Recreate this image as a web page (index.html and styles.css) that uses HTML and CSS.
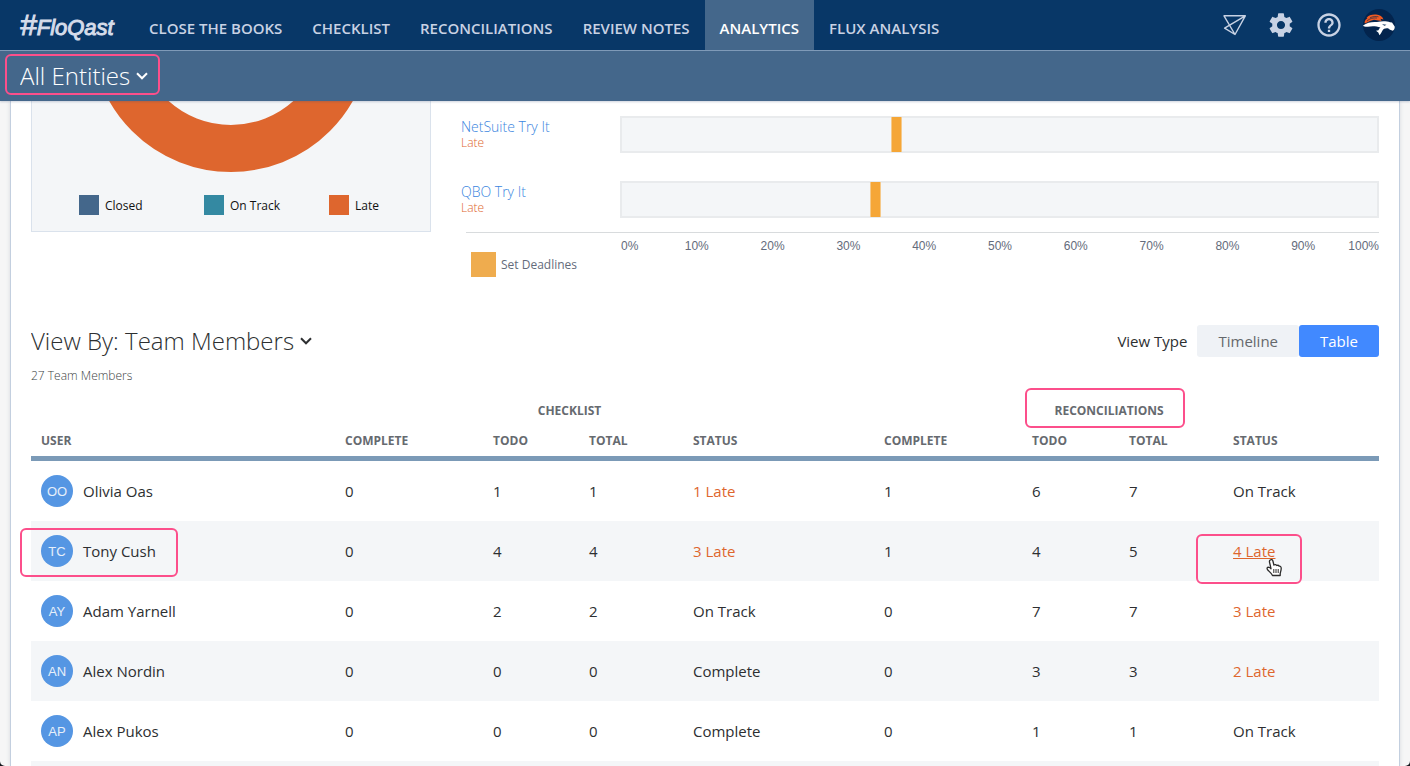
FILE: index.html
```html
<!DOCTYPE html>
<html lang="en">
<head>
<meta charset="utf-8">
<title>FloQast – Analytics</title>
<link rel="stylesheet" href="styles.css">
</head>
<body>
<div class="app">
  <header class="header">
    <div class="topbar">
      <a class="logo" href="#"><span class="logo-hash">#</span>FloQast</a>
      <nav class="nav">
        <a class="nav-link" href="#">CLOSE THE BOOKS</a>
        <a class="nav-link" href="#">CHECKLIST</a>
        <a class="nav-link" href="#">RECONCILIATIONS</a>
        <a class="nav-link" href="#">REVIEW NOTES</a>
        <a class="nav-link nav-link-active" href="#" aria-current="page">ANALYTICS</a>
        <a class="nav-link" href="#">FLUX ANALYSIS</a>
      </nav>
      <div class="tools">
        <button class="tool" type="button" aria-label="Send">
          <svg width="24" height="24" viewBox="0 0 24 24" fill="none" stroke="#c8d2e4" stroke-width="1.4" stroke-linejoin="round"><path d="M1 2.800H22.300L12 21.500ZM22.300 2.800L1.600 15.200L12 21.500"/></svg>
        </button>
        <button class="tool" type="button" aria-label="Settings">
          <svg width="28" height="28" viewBox="0 0 24 24" fill="#c8d2e4"><path d="M19.43 12.98c.04-.32.07-.64.07-.98s-.03-.66-.07-.98l2.11-1.65c.19-.15.24-.42.12-.64l-2-3.46c-.12-.22-.39-.3-.61-.22l-2.49 1c-.52-.4-1.08-.73-1.69-.98l-.38-2.65C14.46 2.18 14.25 2 14 2h-4c-.25 0-.46.18-.49.42l-.38 2.65c-.61.25-1.17.59-1.69.98l-2.49-1c-.23-.09-.49 0-.61.22l-2 3.46c-.13.22-.07.49.12.64l2.11 1.65c-.04.32-.07.65-.07.98s.03.66.07.98l-2.11 1.65c-.19.15-.24.42-.12.64l2 3.46c.12.22.39.3.61.22l2.49-1c.52.4 1.08.73 1.69.98l.38 2.65c.03.24.24.42.49.42h4c.25 0 .46-.18.49-.42l.38-2.65c.61-.25 1.17-.59 1.69-.98l2.49 1c.23.09.49 0 .61-.22l2-3.46c.12-.22.07-.49-.12-.64l-2.11-1.65zM12 15.5c-1.93 0-3.5-1.57-3.5-3.5s1.57-3.5 3.5-3.5 3.5 1.57 3.5 3.5-1.57 3.500-3.5 3.500z"/></svg>
        </button>
        <button class="tool" type="button" aria-label="Help">
          <svg width="28" height="28" viewBox="0 0 24 24" fill="#c8d2e4"><path d="M11 18h2v-2h-2v2zm1-16C6.480 2 2 6.480 2 12s4.480 10 10 10 10-4.480 10-10S17.520 2 12 2zm0 18c-4.410 0-8-3.590-8-8s3.590-8 8-8 8 3.590 8 8-3.590 8-8 8zm0-14c-2.210 0-4 1.790-4 4h2c0-1.100.9-2 2-2s2 .9 2 2c0 2-3 1.750-3 5h2c0-2.250 3-2.500 3-5 0-2.210-1.790-4-4-4z"/></svg>
        </button>
        <button class="tool" type="button" aria-label="Account">
          <svg width="32" height="32" viewBox="0 0 32 32"><circle cx="16" cy="16" r="16" fill="#03244d"/><path d="M1.500 13.500C2 11 3 10 4.500 9.500L3.500 9C5.500 6 9 5.300 13 5.500C17 5.700 19.500 7.500 20.500 10.500L17.500 9.700L18.500 12L11 10.800L7 12L2 14.500Z" fill="#f05a22"/><path d="M4 12C6.500 9.500 10 8.600 14 9M7 8.800C10 7.300 12.500 7.200 15.500 7.800" fill="none" stroke="#03244d" stroke-width=".6"/><path d="M0 16.500C4 13.500 9 12.500 14 13C19 11.900 24 12.200 27 13.200L29 13.500L31.700 17.500C32 19 31.200 21 29.800 21.800L27 20.800L25 19.300C22 19 20.500 19.800 19.500 21.500C18.800 23 18 24.300 16.500 26.300L15.300 23.500L13 21.800L15.500 21.300C15.800 20 16.500 19.200 17.500 18.400C13 16.900 8 16.900 5 17.800C3 18 1 17.800 0 16.500Z" fill="#fff"/><path d="M19 15.200L23.500 15.700L21.500 16.700Z" fill="#03244d"/></svg>
        </button>
      </div>
    </div>
    <div class="entitybar">
      <div class="dropdown dropdown-light">
        <select class="dropdown-select" aria-label="Entity"><option>All Entities</option></select>
        <svg class="chevron" width="12" height="8" viewBox="0 0 12 8"><path d="M1 1.300L6 6.300L11 1.300"/></svg>
        <span class="callout callout-entity"></span>
      </div>
    </div>
  </header>

  <main class="panel">
    <section class="charts">
      <div class="donut-card">
        <svg class="donut" width="280" height="71" viewBox="0 209 280 71" role="img" aria-label="All entities late"><circle cx="140" cy="140" r="116.500" fill="none" stroke="#de662e" stroke-width="47"/></svg>
        <ul class="legend">
          <li class="legend-item"><span class="swatch swatch-closed"></span>Closed</li>
          <li class="legend-item"><span class="swatch swatch-track"></span>On Track</li>
          <li class="legend-item"><span class="swatch swatch-late"></span>Late</li>
        </ul>
      </div>
      <div class="progress">
        <div class="progress-row">
          <div class="progress-label"><a class="entity-link" href="#">NetSuite Try It</a><span class="entity-status">Late</span></div>
          <div class="bar"><span class="marker" style="left:35.6%"></span></div>
        </div>
        <div class="progress-row">
          <div class="progress-label"><a class="entity-link" href="#">QBO Try It</a><span class="entity-status">Late</span></div>
          <div class="bar"><span class="marker" style="left:32.9%"></span></div>
        </div>
        <div class="axis">
          <div class="axis-scale"><span>0%</span><span>10%</span><span>20%</span><span>30%</span><span>40%</span><span>50%</span><span>60%</span><span>70%</span><span>80%</span><span>90%</span><span>100%</span></div>
        </div>
        <div class="deadline-legend"><span class="swatch swatch-deadline"></span>Set Deadlines</div>
      </div>
    </section>

    <section class="team">
      <div class="team-head">
        <div class="dropdown">
          <select class="dropdown-select" aria-label="View by"><option>View By: Team Members</option></select>
          <svg class="chevron" width="12" height="8" viewBox="0 0 12 8"><path d="M1 1.300L6 6.300L11 1.300"/></svg>
        </div>
        <div class="view-type">
          <span class="view-label">View Type</span>
          <button class="toggle" type="button" aria-pressed="false">Timeline</button>
          <button class="toggle toggle-on" type="button" aria-pressed="true">Table</button>
        </div>
      </div>
      <p class="count">27 Team Members</p>
      <table class="table">
        <colgroup><col class="c-user"><col class="c-complete"><col class="c-todo"><col class="c-total"><col class="c-status"><col class="c-complete"><col class="c-todo-rec"><col class="c-total"><col class="c-last"></colgroup>
        <thead>
          <tr class="group-row"><td></td><th class="group-check" colspan="4" scope="colgroup">CHECKLIST</th><th class="group-rec" colspan="4" scope="colgroup"><span class="anchor">RECONCILIATIONS<span class="callout callout-rec"></span></span></th></tr>
          <tr class="head-row"><th scope="col">USER</th><th scope="col">COMPLETE</th><th scope="col">TODO</th><th scope="col">TOTAL</th><th scope="col">STATUS</th><th scope="col">COMPLETE</th><th scope="col">TODO</th><th scope="col">TOTAL</th><th scope="col">STATUS</th></tr>
        </thead>
        <tbody>
          <tr><td><div class="user"><span class="avatar">OO</span>Olivia Oas</div></td><td>0</td><td>1</td><td>1</td><td><a class="late" href="#">1 Late</a></td><td>1</td><td>6</td><td>7</td><td>On Track</td></tr>
          <tr><td><div class="user"><span class="avatar">TC</span>Tony Cush<span class="callout callout-user"></span></div></td><td>0</td><td>4</td><td>4</td><td><a class="late" href="#">3 Late</a></td><td>1</td><td>4</td><td>5</td><td><span class="anchor"><a class="late late-hover" href="#">4 Late</a><span class="callout callout-late"></span>
            <svg class="pointer" width="18" height="20" viewBox="0 0 18 20"><path d="M5.200 2C6.500 1 7.600 1.800 7.900 3L8.900 7C10 6.300 11.200 6.700 11.700 7.500C12.700 7 13.700 7.400 14.200 8.200C15.400 8 16.200 8.800 16.200 10.200C16.300 12.500 15.300 14 15.200 15.800V17.500H7.500C6.700 15.500 4.500 13.700 3 12.200C1.600 10.800 1.800 9.300 3.200 9.200C4.300 9.200 5.300 10 6 10.700L4.600 4.500C4.300 3.400 4.400 2.500 5.200 2Z" fill="#fff" stroke="#2b2b2b" stroke-width="1.300" stroke-linejoin="round"/><path d="M8.800 11V15M11 11V15M13.200 11V15" stroke="#2b2b2b"/></svg></span></td></tr>
          <tr><td><div class="user"><span class="avatar">AY</span>Adam Yarnell</div></td><td>0</td><td>2</td><td>2</td><td>On Track</td><td>0</td><td>7</td><td>7</td><td><a class="late" href="#">3 Late</a></td></tr>
          <tr><td><div class="user"><span class="avatar">AN</span>Alex Nordin</div></td><td>0</td><td>0</td><td>0</td><td>Complete</td><td>0</td><td>3</td><td>3</td><td><a class="late" href="#">2 Late</a></td></tr>
          <tr><td><div class="user"><span class="avatar">AP</span>Alex Pukos</div></td><td>0</td><td>0</td><td>0</td><td>Complete</td><td>0</td><td>1</td><td>1</td><td>On Track</td></tr>
          <tr><td></td><td></td><td></td><td></td><td></td><td></td><td></td><td></td><td></td></tr>
        </tbody>
      </table>
    </section>
  </main>
</div>
</body>
</html>
```

FILE: styles.css
```css
* { box-sizing: border-box; }

html { background: #14181d; }

body {
  margin: 0;
  font-family: "Open Sans", "Noto Sans", sans-serif;
  font-size: 15px;
  color: #2d2f31;
}

a { color: inherit; text-decoration: none; }

button, select { font: inherit; color: inherit; border: 0; padding: 0; background: none; }

.app {
  display: flex;
  flex-direction: column;
  height: 100vh;
  overflow: hidden;
  background: #f6f6f6;
  border-radius: 0 0 5px 5px;
}

/* Header */
.header { flex: none; position: relative; z-index: 1; box-shadow: 0 1px 2px rgba(60, 80, 120, 0.25); }

.topbar { display: flex; height: 50px; background: #083767; color: #c8d2e4; }

.logo {
  width: 134px;
  padding-left: 20px;
  font: italic 22px/56px "Liberation Sans", sans-serif;
  white-space: nowrap;
  color: #d5dcea;
  -webkit-text-stroke: 1px #d5dcea;
}

.logo-hash { font-size: 30px; line-height: 0; }

.nav { display: flex; flex: 1; }

.nav-link {
  display: flex;
  align-items: center;
  padding: 6px 15px 0;
  font-weight: 600;
  white-space: nowrap;
}

.nav-link-active { background: #44678b; color: #fff; }

.tools { display: flex; align-items: center; gap: 20px; padding-right: 15px; }

.tool { display: flex; cursor: pointer; }

.entitybar {
  display: flex;
  align-items: center;
  height: 51px;
  padding-left: 20px;
  background: #44678b;
  border-top: 1px solid #7f9ab8;
}

.dropdown { position: relative; display: flex; align-items: center; gap: 6px; }

.dropdown-select {
  appearance: none;
  field-sizing: content;
  font-size: 24px;
  font-weight: 300;
  line-height: 34px;
  cursor: pointer;
}

.dropdown-light { color: #fff; }

.chevron { fill: none; stroke: currentColor; stroke-width: 2; }

/* Content panel */
.panel {
  flex: 1;
  min-height: 0;
  overflow: hidden;
  margin: 0 10px;
  padding: 0 20px;
  background: #fff;
  border: solid #c3cfdf;
  border-width: 0 1px;
  box-shadow: 0 0 4px #d5d8dd;
}

.charts { display: flex; gap: 30px; }

.donut-card {
  width: 400px;
  height: 131px;
  background: #f4f6f8;
  border: 1px solid #dae2ec;
  border-top: 0;
}

.donut { display: block; margin: 0 auto; }

.legend { display: flex; margin: 23px 0 0; padding: 0 0 0 47px; list-style: none; }

.legend-item { display: flex; flex: none; align-items: center; gap: 6px; width: 125px; font-size: 12px; color: #111; }

.legend-item:last-child { width: auto; }

.swatch { width: 20px; height: 20px; }
.swatch-closed { background: #44678b; }
.swatch-track { background: #3489a2; }
.swatch-late { background: #de662e; }
.swatch-deadline { width: 25px; height: 25px; background: #efac4e; }

.progress { flex: 1; padding-top: 15px; }

.progress-row { display: flex; height: 65px; }

.progress-label { display: flex; flex-direction: column; width: 159px; font-weight: 300; }

.entity-link { font-size: 14px; line-height: 22px; color: #3b86e0; }

.entity-status { font-size: 12px; line-height: 10px; color: #de662e; }

.bar { position: relative; flex: 1; height: 37px; background: #f4f6f8; border: 2px solid #e9ebed; }

.marker { position: absolute; top: -1px; bottom: -1px; width: 11px; background: #f5a637; border: solid #f5c98a; border-width: 0 1px; }

.axis { margin: -14px 0 0 5px; padding: 5px 0 0 155px; border-top: 1px solid #d8dbdd; }

.axis-scale {
  display: grid;
  grid-template-columns: 1fr repeat(9, 2fr) 1fr;
  font: 12px/16px "Liberation Sans", sans-serif;
  color: #646b7b;
  text-align: center;
}

.axis-scale span:first-child { text-align: left; }
.axis-scale span:last-child { display: flex; justify-content: flex-end; }

.deadline-legend {
  display: flex;
  align-items: center;
  gap: 5px;
  margin: -2px 0 0 10px;
  font-size: 12px;
  color: #646b7b;
}

/* Team section */
.team { padding-top: 48px; }

.team-head { display: flex; justify-content: space-between; align-items: center; height: 32px; }

.view-type { display: flex; align-items: center; }

.view-label { margin-right: 10px; }

.toggle {
  height: 32px;
  padding: 0 21px;
  background: #eff2f6;
  border-radius: 3px;
  color: #65686c;
  cursor: pointer;
}

.toggle-on { background: #4189ff; color: #fff; font-weight: 500; }

.count { margin: 10px 0 11px; font-size: 12px; line-height: 17px; font-weight: 300; color: #3c3f43; }

.table { width: 100%; table-layout: fixed; border-collapse: separate; border-spacing: 0; }

.c-user { width: 304px; }
.c-complete { width: 148px; }
.c-todo { width: 96px; }
.c-todo-rec { width: 97px; }
.c-total { width: 104px; }
.c-status { width: 191px; }
.c-last { width: 156px; }

.table th, .table td { padding: 0 0 0 10px; text-align: left; }

.table th { font-size: 12px; font-weight: 700; color: #666a6f; }

.group-row { height: 30px; }

.table .group-check, .table .group-rec { text-align: center; padding-left: 0; }
.table .group-check { padding-right: 70px; }
.table .group-rec { padding-right: 35px; }

.head-row { height: 36px; }
.head-row th { border-bottom: 5px solid #7b9ab7; }

.table tbody td { height: 60px; }
.table tbody tr:nth-child(even) { background: #f4f6f8; }

.user { position: relative; display: flex; align-items: center; gap: 10px; }

.avatar {
  display: flex;
  align-items: center;
  justify-content: center;
  width: 32px;
  height: 32px;
  padding-top: 1px;
  border-radius: 50%;
  background: #5596e3;
  font: 13px "Liberation Sans", sans-serif;
  color: #e6effa;
}

.late { color: #de662e; }
.late-hover { text-decoration: underline; }

/* Highlights over the content */
.anchor { position: relative; display: inline-block; }

.callout { position: absolute; border: 2px solid #fc4f8b; border-radius: 6px; pointer-events: none; }
.callout-entity { top: -5px; bottom: -2px; left: -15px; right: -12px; }
.callout-rec { top: -14px; bottom: -9px; left: -30px; right: -21px; }
.callout-user { top: -7px; left: -21px; width: 158px; height: 49px; }
.callout-late { top: -7px; left: -37px; width: 106px; height: 50px; }

.pointer { position: absolute; left: 32px; top: 17px; }
```
